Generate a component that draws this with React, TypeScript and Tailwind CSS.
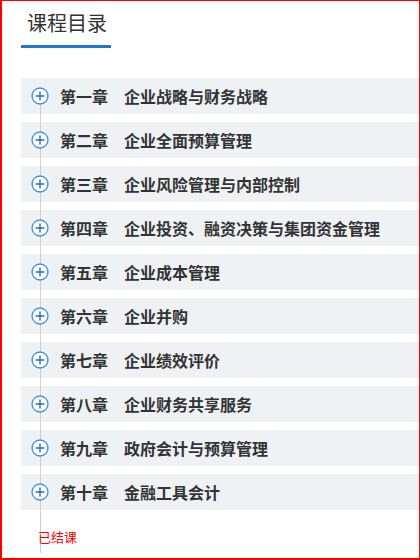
import React from "react";

const chapters: [string, string][] = [
  ["第一章", "企业战略与财务战略"],
  ["第二章", "企业全面预算管理"],
  ["第三章", "企业风险管理与内部控制"],
  ["第四章", "企业投资、融资决策与集团资金管理"],
  ["第五章", "企业成本管理"],
  ["第六章", "企业并购"],
  ["第七章", "企业绩效评价"],
  ["第八章", "企业财务共享服务"],
  ["第九章", "政府会计与预算管理"],
  ["第十章", "金融工具会计"],
];

const PlusCircle = () => (
  <svg width="18" height="18" viewBox="0 0 18 18" className="relative z-20 shrink-0">
    <circle cx="9" cy="9" r="8" fill="#fff" stroke="#3a8ee0" strokeWidth="1.3" />
    <path d="M9 4.6v8.8M4.6 9h8.8" stroke="#1f6fc4" strokeWidth="1.4" />
  </svg>
);

export default function App() {
  return (
    <div
      className="h-[560px] w-[420px] border-t border-r border-l-2 border-b-2 border-[#f00] bg-white pl-[19px]"
      style={{ fontFamily: '"Noto Sans CJK SC", "Noto Sans", sans-serif' }}
    >
      {/* Title */}
      <div className="pt-[7px]">
        <div className="inline-block w-[90px] border-b-[3px] border-[#1a78d4] pl-[6px] pb-[7px] text-[20px] leading-[30px] text-[#333]">
          课程目录
        </div>
      </div>

      {/* Chapter list */}
      <div className="relative mt-[30px]">
        <div className="flex flex-col gap-2">
          {chapters.map(([no, name]) => (
            <div
              key={no}
              className="flex h-9 items-center bg-[#eff2f5] pl-[10px]"
            >
              <PlusCircle />
              <span className="ml-[11px] text-[16px] font-bold text-[#333]">
                {no}
              </span>
              <span className="ml-4 text-[16px] font-bold text-[#333]">
                {name}
              </span>
            </div>
          ))}
        </div>
        <div className="absolute left-[19px] top-[19px] z-10 h-[456px] w-px bg-[#cfcfcf]" />
        <div className="relative z-20 mt-[18px] pl-[17px] text-[13px] leading-[18px] text-[#f00]">
          已结课
        </div>
      </div>
    </div>
  );
}
